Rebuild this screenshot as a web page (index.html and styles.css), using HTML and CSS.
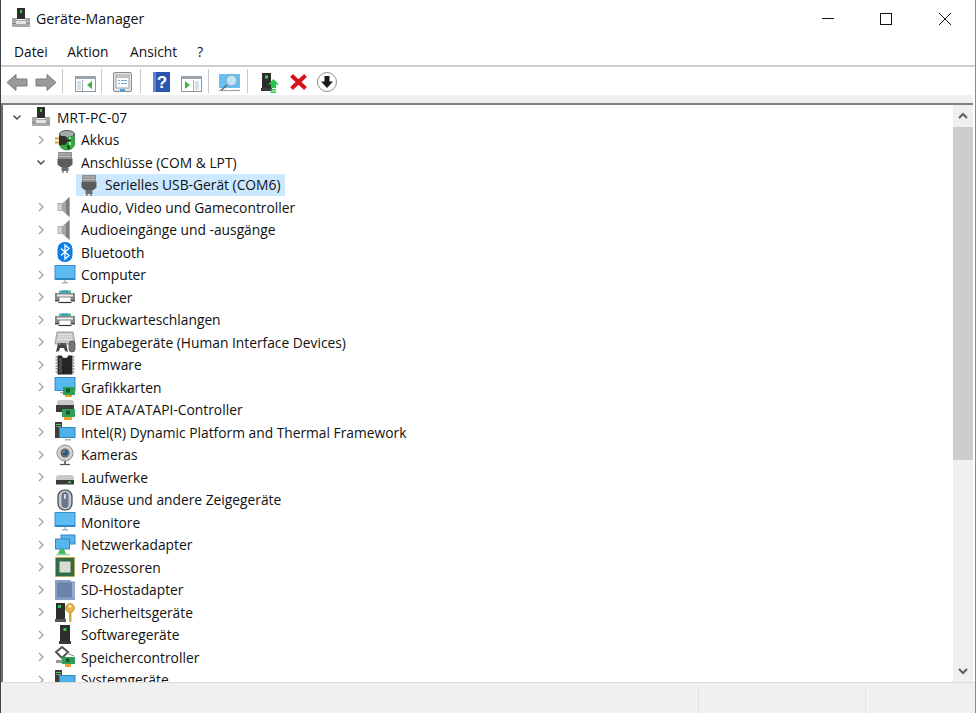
FILE: index.html
```html
<!DOCTYPE html>
<html lang="de">
<head>
<meta charset="utf-8">
<title>Geräte-Manager</title>
<link rel="stylesheet" href="styles.css">
</head>
<body>
<svg class="defs" xmlns="http://www.w3.org/2000/svg">
  <symbol id="i-root" viewBox="0 0 22 22">
    <path d="M2 11h5V13h8V11h5v9H2z" fill="#a9a9a9"/><path d="M2 16h18v1H2z" fill="#8a8a8a"/>
    <rect x="6" y="14" width="10" height="3" fill="#e4e4e4"/>
    <rect x="7" y="1" width="8" height="11" fill="#2e2e2e"/><rect x="10" y="3" width="2" height="3" fill="#35c24a"/>
  </symbol>
  <symbol id="i-akku" viewBox="0 0 22 22">
    <ellipse cx="13" cy="5" rx="7.500" ry="3.500" fill="#a4abad" stroke="#4e5a5c"/>
    <path d="M5.500 5v10a7.500 6 0 0 0 15 0V5a7.500 3.500 0 0 1-15 0z" fill="#2fb03d" stroke="#1e6d2a" stroke-width=".7"/>
    <path d="M16 8v8" stroke="#9be69e" stroke-width="2"/>
    <rect x="1" y="8.500" width="5" height="2" fill="#d9a92a"/><rect x="1" y="12.500" width="5" height="2" fill="#d9a92a"/>
    <path d="M5 7h5a3 4.500 0 0 1 0 9H5z" fill="#303030"/><path d="M12 11.500h5M14 16l1 4" stroke="#202020" stroke-width="1.800"/>
  </symbol>
  <symbol id="i-port" viewBox="0 0 22 22">
    <rect x="4" y="1" width="14" height="6.500" fill="#8f8f8f"/><path d="M5.500 3h11M5.500 5.500h11" stroke="#f2f2f2" stroke-dasharray="1 1"/>
    <path d="M3.500 7.500h15v6l-3 2.500H6.500l-3-2.500z" fill="#5c5c5c"/><rect x="7.500" y="16" width="7" height="4" fill="#6e6e6e"/>
    <path d="M9 20v2M13 20v2" stroke="#444"/>
  </symbol>
  <symbol id="i-sound" viewBox="0 0 22 22">
    <rect x="4" y="7.500" width="4" height="7" fill="#d4d4d4" stroke="#9c9c9c" stroke-width=".7"/>
    <path d="M8 7.500 15.500 1v20L8 14.500z" fill="#a6a6a6"/><path d="M12 4.500 15.500 1v20L12 17.500z" fill="#7f7f7f"/>
  </symbol>
  <symbol id="i-bt" viewBox="0 0 22 22">
    <rect x="3.500" y="1" width="15" height="20" rx="7" fill="#0a7de6"/>
    <path d="M7 7.500l8 7-4 3.500V4l4 3.500-8 7" fill="none" stroke="#fff" stroke-width="1.300"/>
  </symbol>
  <symbol id="i-mon" viewBox="0 0 22 22">
    <rect x="1" y="1.500" width="20" height="14" fill="#5bbcf3" stroke="#3c8cc6"/><rect x="1.500" y="14" width="19" height="1.500" fill="#2c86c4"/>
    <path d="M8 18h6v1.500H8z" fill="#a8b4bc"/><path d="M10 16h2v2h-2z" fill="#c5ced4"/>
  </symbol>
  <symbol id="i-print" viewBox="0 0 22 22">
    <path d="M5 4.500h12V7H5z" fill="#4dbb8a"/><path d="M8 4.500h6V6.500H8z" fill="#2d96df"/>
    <path d="M1 7h20v8H1z" fill="#868686"/><path d="M3 8.500h16v2H3z" fill="#ececec"/>
    <path d="M5.500 11.500h11V16h-11z" fill="#fff"/><path d="M4.500 16.500h13" stroke="#333" stroke-width="1.200"/>
    <path d="M1 14h4v1.500H1zM17 14h4v1.500h-4z" fill="#4c4c4c"/>
  </symbol>
  <symbol id="i-hid" viewBox="0 0 22 22">
    <path d="M3 1h16l2 12H1z" fill="#c8c8c8" stroke="#8a8a8a" stroke-width=".8"/>
    <path d="M4.500 3.500h13M4 6h14M3.500 8.500h15" stroke="#f2f2f2" stroke-dasharray="1.500 .7"/>
    <path d="M2 21l2-9h8l2 9-3-1-1-3H6l-1 3z" fill="#474747"/><circle cx="6" cy="13" r="1" fill="#e2701f"/><circle cx="10" cy="13" r="1" fill="#2f87d8"/>
    <rect x="15" y="10" width="6" height="11" rx="3" fill="#777" stroke="#444" stroke-width=".7"/>
  </symbol>
  <symbol id="i-fw" viewBox="0 0 22 22">
    <path d="M3.500 1.500H8a3 2.500 0 0 0 6 0h4.500v19h-15z" fill="#262626"/>
    <path d="M1.500 3h2M1.500 6h2M1.500 9h2M1.500 12h2M1.500 15h2M1.500 18h2M18.500 3h2M18.500 6h2M18.500 9h2M18.500 12h2M18.500 15h2M18.500 18h2" stroke="#8a8a8a" stroke-width="1.300"/>
    <path d="M5 4h3v15H5z" fill="#4b4b4b"/>
  </symbol>
  <symbol id="i-gpu" viewBox="0 0 22 22">
    <rect x="1" y="1.500" width="20" height="13" fill="#56b8ef" stroke="#3b88c2"/><path d="M6 16h6v1.500H6z" fill="#a8b4bc"/>
    <rect x="9" y="11" width="12" height="8" fill="#2e9f57"/><rect x="12" y="12.500" width="4" height="4" fill="#17592f"/>
    <rect x="11" y="19" width="7" height="2" fill="#e3a52c"/>
  </symbol>
  <symbol id="i-ide" viewBox="0 0 22 22">
    <path d="M3 3q0-2 3-2h11q3 0 3 2v3H3z" fill="#c9c9c9"/><rect x="2" y="6" width="18" height="7" fill="#3b3b3b"/>
    <rect x="8" y="10" width="13" height="8" fill="#2e9f57"/><rect x="12" y="11.500" width="4" height="4" fill="#17592f"/>
    <rect x="10" y="18" width="8" height="3" fill="#eca528"/>
  </symbol>
  <symbol id="i-sys" viewBox="0 0 22 22">
    <rect x="1" y="1" width="7" height="16" fill="#3d3d3d"/><rect x="2" y="3" width="5" height="1" fill="#59c26a"/><rect x="2" y="5" width="5" height="1" fill="#8a8a8a"/>
    <rect x="5.500" y="6.500" width="15.500" height="10" fill="#4fb0ec" stroke="#3383bd"/><path d="M11 18h6v1.500h-6z" fill="#a8b4bc"/>
  </symbol>
  <symbol id="i-cam" viewBox="0 0 22 22">
    <circle cx="11" cy="9" r="8" fill="#d2d2d2" stroke="#909090"/><circle cx="11" cy="9" r="4.500" fill="#5d6a73"/><circle cx="11" cy="9" r="2.200" fill="#1f4f80"/><circle cx="10" cy="8" r=".8" fill="#bfe2ff"/>
    <path d="M10 17h2v3h-2z" fill="#777"/><path d="M6 20.500h10" stroke="#555" stroke-width="1.300"/>
  </symbol>
  <symbol id="i-drive" viewBox="0 0 22 22">
    <path d="M2 12q0-3 3-3h12q3 0 3 3v2H2z" fill="#c9c9c9"/><rect x="2" y="14" width="18" height="4.500" fill="#3a3a3a"/><rect x="14" y="15.500" width="3" height="1.500" fill="#45d25e"/>
  </symbol>
  <symbol id="i-mouse" viewBox="0 0 22 22">
    <rect x="4" y="1" width="14" height="20" rx="6.500" fill="#c4c9cd" stroke="#3c3f44" stroke-width="1.200"/>
    <rect x="7.500" y="3" width="7" height="16" rx="3.500" fill="#69788b"/><rect x="10" y="5" width="2" height="5" rx="1" fill="#d3dbe4"/>
  </symbol>
  <symbol id="i-net" viewBox="0 0 22 22">
    <rect x="7" y="1" width="14" height="9" fill="#58b6ef" stroke="#3a86bf"/>
    <rect x="1.500" y="5" width="14" height="10" fill="#58b6ef" stroke="#3a86bf"/>
    <path d="M6 15h4l2 5H4z" fill="#3bbf5b"/><path d="M2 20h14v1.500H2z" fill="#a7d8b4"/>
  </symbol>
  <symbol id="i-cpu" viewBox="0 0 22 22">
    <rect x="1.500" y="1.500" width="19" height="19" fill="#2f6d45" stroke="#c9a53c" stroke-dasharray="1.500 .5"/>
    <rect x="3" y="3" width="16" height="16" fill="#2f6d45"/><rect x="5.500" y="5.500" width="11" height="11" fill="#d9dbd8"/>
  </symbol>
  <symbol id="i-sd" viewBox="0 0 22 22">
    <path d="M1 1h15l1.500 1.500h3.500V21H1z" fill="#86a0ca"/><rect x="3" y="3.500" width="15" height="15" fill="#6d84aa"/><path d="M18 4l3 1v14l-3-1z" fill="#97acd0"/>
  </symbol>
  <symbol id="i-sec" viewBox="0 0 22 22">
    <rect x="2" y="2" width="9" height="16" fill="#2e2e2e"/><rect x="4" y="4" width="3" height="3" fill="#32c44a"/><path d="M1 18h11v3H1z" fill="#555"/>
    <circle cx="16" cy="7" r="4.500" fill="#e7b44a" stroke="#b98a25" stroke-width=".7"/><circle cx="16" cy="5.500" r="1.200" fill="#fff"/>
    <path d="M15 11h2.500v9l-1.200 1.500L15 20z" fill="#d9a53a"/>
  </symbol>
  <symbol id="i-soft" viewBox="0 0 22 22">
    <rect x="6" y="1" width="10" height="16" fill="#2e2e2e"/><rect x="9.500" y="4" width="3" height="3" fill="#32c44a"/><path d="M5 17h12v3H5z" fill="#3a3a3a"/>
  </symbol>
  <symbol id="i-store" viewBox="0 0 22 22">
    <path d="M8 1l6 5-6 6-6-6z" fill="none" stroke="#555" stroke-width="2"/><path d="M2 14h8v3H2z" fill="#9a9a9a"/>
    <path d="M12 7l8 3" stroke="#888"/><rect x="8" y="11" width="13" height="7" fill="#2e9f57"/><rect x="12" y="12.500" width="3.500" height="3.500" fill="#17592f"/>
    <rect x="11" y="18" width="6" height="3" fill="#eca528"/>
  </symbol>
</svg>

<div class="window">
  <header class="titlebar">
    <svg class="title-icon"><use href="#i-root"/></svg>
    <span class="title">Geräte-Manager</span>
    <div class="controls">
      <span class="ctl"><svg width="14" height="14" viewBox="0 0 14 14"><path d="M1 6.500h12" stroke="#111"/></svg></span>
      <span class="ctl"><svg width="14" height="14" viewBox="0 0 14 14"><rect x="1.500" y="1.500" width="11" height="11" fill="none" stroke="#111"/></svg></span>
      <span class="ctl"><svg width="14" height="14" viewBox="0 0 14 14"><path d="M1 1l12 12M13 1L1 13" stroke="#111"/></svg></span>
    </div>
  </header>
  <nav class="menubar">
    <span class="menu m-datei">Datei</span>
    <span class="menu m-aktion">Aktion</span>
    <span class="menu m-ansicht">Ansicht</span>
    <span class="menu">?</span>
  </nav>
  <div class="toolbar">
    <span class="btn"><svg viewBox="0 0 29 24"><path d="M4 13.500 13 5.500v4.500h11v7H13v4.500z" fill="#9a9a9a" stroke="#7c7c7c"/></svg></span>
    <span class="btn"><svg viewBox="0 0 29 24"><path d="M24 13.500 15 5.500v4.500H4v7h11v4.500z" fill="#9a9a9a" stroke="#7c7c7c"/></svg></span>
    <span class="sep"></span>
    <span class="btn"><svg viewBox="0 0 29 24"><rect x="4.500" y="7.500" width="20" height="15" fill="#fff" stroke="#8e98a2"/><rect x="4" y="7" width="21" height="3" fill="#98a4ae"/><rect x="6" y="12" width="4" height="9" fill="#cfe0ee"/><path d="M11.500 11v11" stroke="#a9b2ba"/><path d="M21 12v8l-5-4z" fill="#3db54a"/></svg></span>
    <span class="sep"></span>
    <span class="btn"><svg viewBox="0 0 29 24"><rect x="3.500" y="3.500" width="18" height="19" rx="1.500" fill="#e6e6e6" stroke="#8a8a8a"/><rect x="6" y="6" width="13" height="13" fill="#fff" stroke="#9a9a9a"/><path d="M6 8h13" stroke="#b9c2ca" stroke-width="2"/><path d="M8 11.500h2M11 11.500h6M8 14.500h2M11 14.500h6" stroke="#6fa8d8"/><rect x="10" y="20" width="5" height="2" fill="#39a7ea"/></svg></span>
    <span class="sep"></span>
    <span class="btn"><svg viewBox="0 0 29 24"><rect x="4" y="3" width="17" height="20" fill="#2c56ad"/><rect x="4" y="3" width="3" height="20" fill="#5c86d6"/><text class="help-mark" x="13" y="19">?</text></svg></span>
    <span class="btn"><svg viewBox="0 0 29 24"><rect x="3.500" y="7.500" width="20" height="15" fill="#fff" stroke="#8e98a2"/><rect x="3" y="7" width="21" height="3" fill="#98a4ae"/><rect x="17" y="12" width="4" height="9" fill="#cfe0ee"/><path d="M15.500 11v11" stroke="#a9b2ba"/><path d="M7 12v8l5-4z" fill="#3db54a"/></svg></span>
    <span class="sep"></span>
    <span class="btn"><svg viewBox="0 0 29 24"><rect x="2" y="5" width="21" height="14" fill="#66c0f0"/><path d="M2 21.500h21" stroke="#9aa6ae" stroke-width="1.200"/><circle cx="14.500" cy="11.500" r="5.500" fill="#bfe3f7" stroke="#7b9cb0"/><path d="M10 16l-6 5.500" stroke="#5d6a73" stroke-width="1.500"/></svg></span>
    <span class="sep"></span>
    <span class="btn"><svg viewBox="0 0 29 24"><rect x="6" y="4" width="9" height="15" fill="#2c2c2c"/><rect x="9" y="6.500" width="3" height="3" fill="#3cd45a"/><path d="M5 19h11v3H5z" fill="#3a3a3a"/><path d="M17.500 10l5.500 5.500h-3V19h-5v-3.500h-3z" fill="#29c24d"/><path d="M14.500 20h5.500v1.500h-5.500zM14.500 22.500h5.500V24h-5.500z" fill="#29c24d"/></svg></span>
    <span class="btn"><svg viewBox="0 0 29 24"><path d="M6.500 6.500l14 13M20.500 6.500l-14 13" stroke="#d8121c" stroke-width="4"/></svg></span>
    <span class="btn"><svg viewBox="0 0 29 24"><circle cx="13" cy="13" r="9.500" fill="#fff" stroke="#8f8f8f"/><path d="M10.500 7h5v5.500H19L13 19l-6-6.500h3.500z" fill="#1a1a1a"/></svg></span>
  </div>
  <div class="band"></div>

  <main class="content">
    <div class="tree">
      <div class="row lvl0"><svg class="chev open" viewBox="0 0 16 16"><path d="M4.500 6.500 8 10l3.500-3.500"/></svg><svg class="icon"><use href="#i-root"/></svg><span>MRT-PC-07</span></div>
      <div class="row lvl1"><svg class="chev" viewBox="0 0 16 16"><path d="M6 4l4 4-4 4"/></svg><svg class="icon"><use href="#i-akku"/></svg><span>Akkus</span></div>
      <div class="row lvl1"><svg class="chev open" viewBox="0 0 16 16"><path d="M4.500 6.500 8 10l3.500-3.500"/></svg><svg class="icon"><use href="#i-port"/></svg><span>Anschlüsse (COM &amp; LPT)</span></div>
      <div class="row lvl2"><div class="selected"><svg class="icon"><use href="#i-port"/></svg><span>Serielles USB-Gerät (COM6)</span></div></div>
      <div class="row lvl1"><svg class="chev" viewBox="0 0 16 16"><path d="M6 4l4 4-4 4"/></svg><svg class="icon"><use href="#i-sound"/></svg><span>Audio, Video und Gamecontroller</span></div>
      <div class="row lvl1"><svg class="chev" viewBox="0 0 16 16"><path d="M6 4l4 4-4 4"/></svg><svg class="icon"><use href="#i-sound"/></svg><span>Audioeingänge und -ausgänge</span></div>
      <div class="row lvl1"><svg class="chev" viewBox="0 0 16 16"><path d="M6 4l4 4-4 4"/></svg><svg class="icon"><use href="#i-bt"/></svg><span>Bluetooth</span></div>
      <div class="row lvl1"><svg class="chev" viewBox="0 0 16 16"><path d="M6 4l4 4-4 4"/></svg><svg class="icon"><use href="#i-mon"/></svg><span>Computer</span></div>
      <div class="row lvl1"><svg class="chev" viewBox="0 0 16 16"><path d="M6 4l4 4-4 4"/></svg><svg class="icon"><use href="#i-print"/></svg><span>Drucker</span></div>
      <div class="row lvl1"><svg class="chev" viewBox="0 0 16 16"><path d="M6 4l4 4-4 4"/></svg><svg class="icon"><use href="#i-print"/></svg><span>Druckwarteschlangen</span></div>
      <div class="row lvl1"><svg class="chev" viewBox="0 0 16 16"><path d="M6 4l4 4-4 4"/></svg><svg class="icon"><use href="#i-hid"/></svg><span>Eingabegeräte (Human Interface Devices)</span></div>
      <div class="row lvl1"><svg class="chev" viewBox="0 0 16 16"><path d="M6 4l4 4-4 4"/></svg><svg class="icon"><use href="#i-fw"/></svg><span>Firmware</span></div>
      <div class="row lvl1"><svg class="chev" viewBox="0 0 16 16"><path d="M6 4l4 4-4 4"/></svg><svg class="icon"><use href="#i-gpu"/></svg><span>Grafikkarten</span></div>
      <div class="row lvl1"><svg class="chev" viewBox="0 0 16 16"><path d="M6 4l4 4-4 4"/></svg><svg class="icon"><use href="#i-ide"/></svg><span>IDE ATA/ATAPI-Controller</span></div>
      <div class="row lvl1"><svg class="chev" viewBox="0 0 16 16"><path d="M6 4l4 4-4 4"/></svg><svg class="icon"><use href="#i-sys"/></svg><span>Intel(R) Dynamic Platform and Thermal Framework</span></div>
      <div class="row lvl1"><svg class="chev" viewBox="0 0 16 16"><path d="M6 4l4 4-4 4"/></svg><svg class="icon"><use href="#i-cam"/></svg><span>Kameras</span></div>
      <div class="row lvl1"><svg class="chev" viewBox="0 0 16 16"><path d="M6 4l4 4-4 4"/></svg><svg class="icon"><use href="#i-drive"/></svg><span>Laufwerke</span></div>
      <div class="row lvl1"><svg class="chev" viewBox="0 0 16 16"><path d="M6 4l4 4-4 4"/></svg><svg class="icon"><use href="#i-mouse"/></svg><span>Mäuse und andere Zeigegeräte</span></div>
      <div class="row lvl1"><svg class="chev" viewBox="0 0 16 16"><path d="M6 4l4 4-4 4"/></svg><svg class="icon"><use href="#i-mon"/></svg><span>Monitore</span></div>
      <div class="row lvl1"><svg class="chev" viewBox="0 0 16 16"><path d="M6 4l4 4-4 4"/></svg><svg class="icon"><use href="#i-net"/></svg><span>Netzwerkadapter</span></div>
      <div class="row lvl1"><svg class="chev" viewBox="0 0 16 16"><path d="M6 4l4 4-4 4"/></svg><svg class="icon"><use href="#i-cpu"/></svg><span>Prozessoren</span></div>
      <div class="row lvl1"><svg class="chev" viewBox="0 0 16 16"><path d="M6 4l4 4-4 4"/></svg><svg class="icon"><use href="#i-sd"/></svg><span>SD-Hostadapter</span></div>
      <div class="row lvl1"><svg class="chev" viewBox="0 0 16 16"><path d="M6 4l4 4-4 4"/></svg><svg class="icon"><use href="#i-sec"/></svg><span>Sicherheitsgeräte</span></div>
      <div class="row lvl1"><svg class="chev" viewBox="0 0 16 16"><path d="M6 4l4 4-4 4"/></svg><svg class="icon"><use href="#i-soft"/></svg><span>Softwaregeräte</span></div>
      <div class="row lvl1"><svg class="chev" viewBox="0 0 16 16"><path d="M6 4l4 4-4 4"/></svg><svg class="icon"><use href="#i-store"/></svg><span>Speichercontroller</span></div>
      <div class="row lvl1"><svg class="chev" viewBox="0 0 16 16"><path d="M6 4l4 4-4 4"/></svg><svg class="icon"><use href="#i-sys"/></svg><span>Systemgeräte</span></div>
    </div>
    <div class="scrollbar">
      <svg class="sb-arrow" viewBox="0 0 20 20"><path d="M6 12l4-4 4 4"/></svg>
      <div class="sb-track"><div class="sb-thumb"></div></div>
      <svg class="sb-arrow" viewBox="0 0 20 20"><path d="M6 8l4 4 4-4"/></svg>
    </div>
  </main>

  <footer class="statusbar">
    <div class="st st-main"></div>
    <div class="st st-mid"></div>
    <div class="st st-end"></div>
  </footer>
</div>
</body>
</html>
```

FILE: styles.css
```css
* { box-sizing: border-box; }
html, body { margin: 0; padding: 0; height: 100%; background: #fff; overflow: hidden; }
body { font-family: "Open Sans", "Noto Sans", "Liberation Sans", sans-serif; font-size: 13.8px; color: #111; }
.defs { display: none; }

.window { height: 713px; display: flex; flex-direction: column; background: #fff; border-left: 1px solid #3c4650; border-right: 1px solid #8a8a8a; }

.titlebar { height: 38px; display: flex; align-items: center; padding-left: 9px; flex: none; }
.title-icon { width: 22px; height: 22px; margin-bottom: 2px; }
.title { margin: 0 0 2px 4px; font-size: 14.2px; color: #111; }
.controls { margin-left: auto; margin-right: 1px; display: flex; }
.ctl { width: 58.500px; height: 38px; display: flex; align-items: center; justify-content: center; }

.menubar { height: 29px; flex: none; display: flex; align-items: center; padding: 0 0 0 13px; border-bottom: 2px solid #cfcfcf; }
.menu { color: #111; }
.m-datei { margin-right: 19.500px; }
.m-aktion { margin-right: 21.500px; }
.m-ansicht { margin-right: 20px; }

.toolbar { height: 28px; flex: none; display: flex; align-items: center; padding-left: 2px; }
.btn { width: 29px; height: 24px; flex: none; display: block; }
.btn svg { width: 29px; height: 24px; display: block; }
.sep { width: 10px; height: 24px; flex: none; display: block; padding-left: 1px; }
.sep::before { content: ""; display: block; width: 1px; height: 100%; background: #c8c8c8; }
.help-mark { font-family: "Liberation Sans", sans-serif; font-size: 17px; font-weight: 700; fill: #fff; text-anchor: middle; }

.band { height: 10px; flex: none; background: #f0f0f0; border-bottom: 2px solid #7f7f7f; margin: 0 2px 0 0; }

.content { flex: 1; min-height: 0; display: flex; border-left: 2px solid #6e6e6e; margin-right: 2px; }
.tree { flex: 1; min-width: 0; overflow: hidden; padding-top: 1px; }
.row { height: 22.500px; display: flex; align-items: center; white-space: nowrap; }
.lvl0 { padding-left: 6px; }
.lvl1 { padding-left: 30px; }
.lvl2 { padding-left: 73px; }
.chev { width: 16px; height: 16px; flex: none; margin-right: 5px; fill: none; stroke: #a6a6a6; stroke-width: 1.400; }
.chev.open { stroke: #444; }
.icon { width: 22px; height: 22px; flex: none; margin-right: 5px; }
.selected { display: flex; align-items: center; height: 22.500px; padding: 0 5px 0 2px; background: #cce8ff; }

.scrollbar { width: 20px; flex: none; display: flex; flex-direction: column; background: #f0f0f0; }
.sb-arrow { width: 20px; height: 22px; flex: none; fill: none; stroke: #5e5e5e; stroke-width: 2; }
.sb-track { flex: 1; min-height: 0; }
.sb-thumb { height: 333px; background: #cdcdcd; }

.statusbar { height: 31px; flex: none; display: flex; background: #f0f0f0; border-top: 1px solid #dcdcdc; padding-top: 2px; }
.st { height: 100%; }
.st-main { width: 698px; border-right: 1px solid #e2e2e2; }
.st-mid { width: 167px; border-right: 1px solid #e2e2e2; }
.st-end { flex: 1; }
```
